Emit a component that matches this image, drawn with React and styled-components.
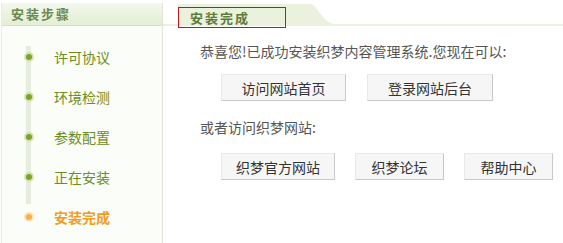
import React from 'react'
import styled, { createGlobalStyle } from 'styled-components'

const Global = createGlobalStyle`
  body {
    margin: 0;
    background: #fff;
    font-family: "Noto Sans CJK SC", "DejaVu Sans", sans-serif;
  }
`

const Page = styled.div`
  display: flex;
  width: 563px;
  height: 243px;
  overflow: hidden;
`

const Sidebar = styled.div`
  width: 160px;
  margin: 3px 0 0 1px;
  background: #fbfdf8;
  border-left: 1px solid #e6ecdf;
  border-right: 1px solid #dfe6d6;
  display: flex;
  flex-direction: column;
`

const SideHead = styled.div`
  height: 22px;
  line-height: 22px;
  padding-left: 9px;
  background: linear-gradient(#f3f8ec, #e3eed5);
  border-bottom: 1px solid #d5e2c2;
  color: #6b8a4e;
  font-size: 13px;
  font-weight: bold;
  letter-spacing: 2px;
`

const Steps = styled.ul`
  list-style: none;
  margin: 0;
  padding: 11px 0 0;
  background: linear-gradient(#e6ecde, #e6ecde) no-repeat 24px 20px / 5px 158px;
`

const Step = styled.li`
  display: flex;
  align-items: center;
  height: 40px;
  font-size: 14px;
  color: ${p => (p.$active ? '#f29c1f' : '#6b8e1e')};
  font-weight: ${p => (p.$active ? 'bold' : 'normal')};
`

const Dot = styled.span`
  width: 6px;
  height: 6px;
  margin: 0 20px 0 22px;
  border-radius: 50%;
  background: ${p => (p.$active ? '#f7b04a' : '#7ba428')};
  border: 2px solid ${p => (p.$active ? '#fce2bd' : '#d3e5b3')};
`

const Main = styled.div`
  flex: 1;
  display: flex;
  flex-direction: column;
`

const TabBar = styled.div`
  display: flex;
  height: 20px;
  margin-top: 4px;
  padding-left: 15px;
  border-bottom: 2px solid #ebf3df;
`

const Tab = styled.div`
  width: 126px;
  height: 20px;
  background: #eaf2dd;
`

const TabLabel = styled.div`
  width: 95px;
  height: 19px;
  margin-top: 3px;
  padding-left: 11px;
  border: 1px solid #c4161c;
  color: #5d7c3c;
  font-size: 13px;
  font-weight: bold;
  line-height: 19px;
  letter-spacing: 2px;
`

const Body = styled.div`
  padding: 15px 0 0 37px;
  color: #555;
  font-size: 14px;
`

const Line = styled.div`
  height: 20px;
  line-height: 20px;
  margin-top: ${p => p.$mt || 0}px;
`

const BtnRow = styled.div`
  display: flex;
  gap: ${p => p.$gap || 20}px;
  padding-left: 21px;
  margin: ${p => p.$m};
`

const Button = styled.button`
  width: ${p => p.$w}px;
  height: 27px;
  padding: 0;
  background: #f6f6f6;
  border: 1px solid;
  border-color: #e9e9e9 #c9c9c9 #c9c9c9 #e9e9e9;
  color: #333;
  font-family: inherit;
  font-size: 14px;
  cursor: pointer;
`

const steps = ['许可协议', '环境检测', '参数配置', '正在安装', '安装完成']

export default function App() {
  return (
    <Page>
      <Global />
      <Sidebar>
        <SideHead>安装步骤</SideHead>
        <Steps>
          {steps.map((s, i) => (
            <Step key={s} $active={i === steps.length - 1}>
              <Dot $active={i === steps.length - 1} />
              {s}
            </Step>
          ))}
        </Steps>
      </Sidebar>
      <Main>
        <TabBar>
          <Tab>
            <TabLabel>安装完成</TabLabel>
          </Tab>
          <svg width="32" height="20" viewBox="0 0 32 20">
            <path d="M0 0 H6 C14 0 18 20 32 20 H0 Z" fill="#eaf2dd" />
          </svg>
        </TabBar>
        <Body>
          <Line>恭喜您!已成功安装织梦内容管理系统.您现在可以:</Line>
          <BtnRow $gap={21} $m="13px 0 0">
            <Button $w={125}>访问网站首页</Button>
            <Button $w={126}>登录网站后台</Button>
          </BtnRow>
          <Line $mt={16}>或者访问织梦网站:</Line>
          <BtnRow $m="16px 0 0">
            <Button $w={114}>织梦官方网站</Button>
            <Button $w={89}>织梦论坛</Button>
            <Button $w={89}>帮助中心</Button>
          </BtnRow>
        </Body>
      </Main>
    </Page>
  )
}
